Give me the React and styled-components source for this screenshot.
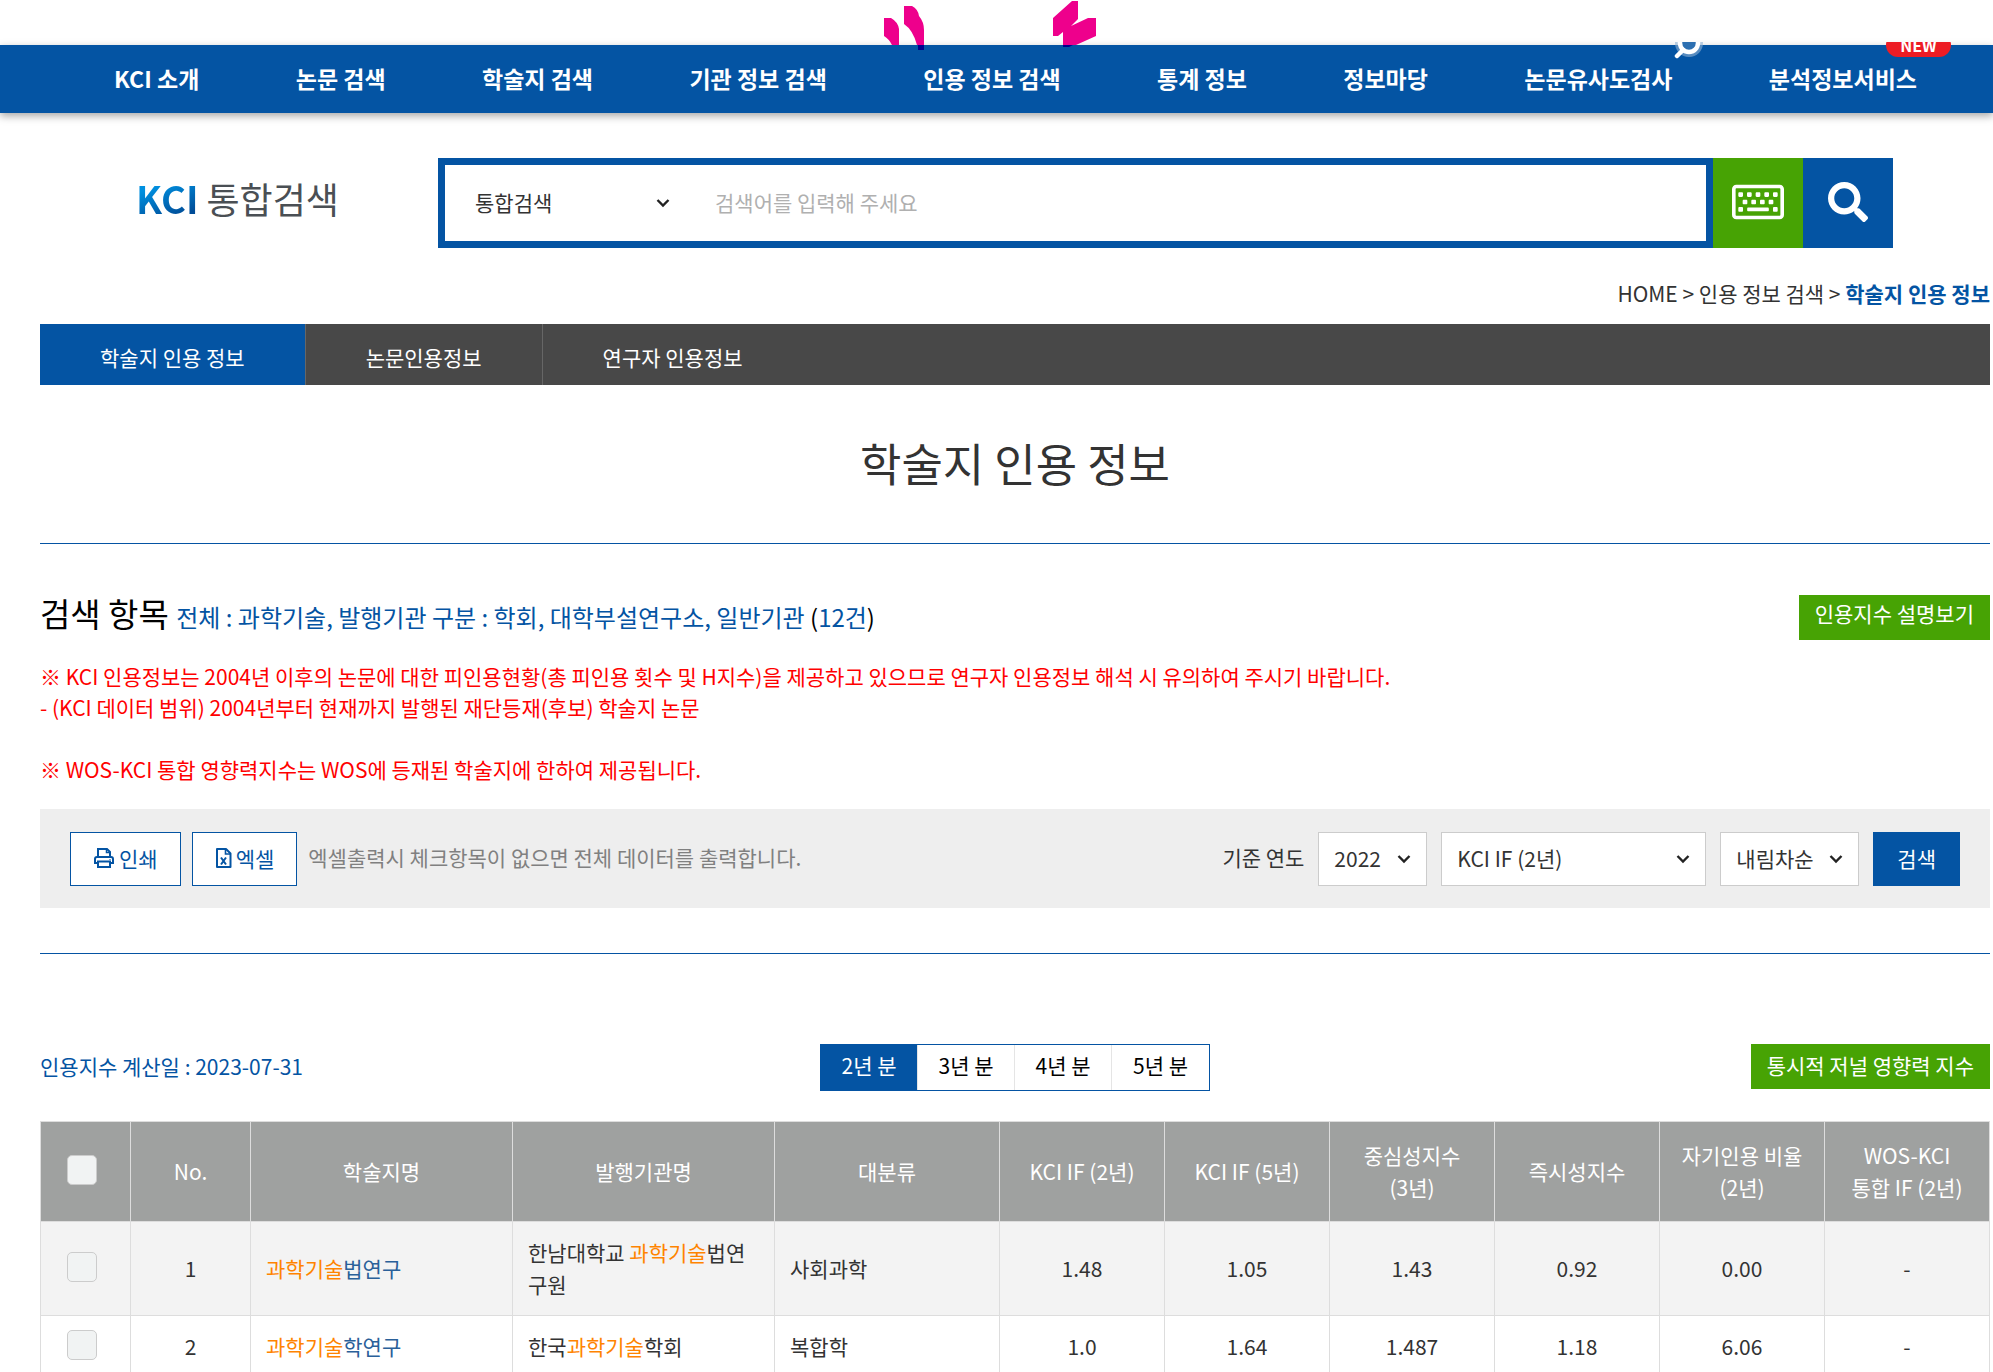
import styled, { createGlobalStyle } from 'styled-components';
import { useState } from 'react';
import { FaRegKeyboard, FaSearch } from 'react-icons/fa';

const GlobalStyle = createGlobalStyle`
    * {
        box-sizing: border-box;
    }
    body {
        margin: 0;
        background-color: white;
        color: #333;
        font-family: "Noto Sans CJK KR", "Noto Sans", sans-serif;
        font-size: 21px;
        line-height: 32px;
    }
    button, input, select {
        font-family: inherit;
        font-size: inherit;
        line-height: inherit;
        color: inherit;
    }
    a {
        color: inherit;
        text-decoration: none;
    }
`;

const Page = styled.div`
    overflow: hidden;
`;

const TopStrip = styled.div`
    position: relative;
    height: 45px;
`;

const TopMark = styled.svg`
    position: absolute;
    left: 44%;
    top: 0;
    z-index: 1;
    width: 220px;
    height: 52px;
`;

const Nav = styled.nav`
    display: flex;
    justify-content: space-between;
    align-items: center;
    height: 68px;
    padding: 0 76px 0 114px;
    background-color: #0454a3;
    box-shadow: 0 3px 8px rgba(0, 0, 0, 0.35);
`;

const NavLink = styled.a`
    position: relative;
    padding-bottom: 2px;
    color: white;
    font-size: 23px;
    line-height: 66px;
    font-weight: 700;
    white-space: nowrap;
`;

const NavMark = styled.span`
    position: absolute;
    top: -3px;
    right: ${(props) => props.$right};
    display: flex;
    align-items: flex-end;
    height: 18px;
    overflow: hidden;
`;

const NewBadge = styled.span`
    width: 65px;
    height: 24px;
    margin-bottom: 3px;
    border-radius: 14px;
    background-color: #ed1c24;
    font-size: 16px;
    line-height: 24px;
    text-align: center;
`;

const SearchSection = styled.form`
    display: flex;
    align-items: center;
    margin: 45px 100px 0 136px;
`;

const SearchLogo = styled.h2`
    width: 302px;
    margin: 0;
    padding-bottom: 10px;
    color: #4a4f54;
    font-size: 36px;
    line-height: 48px;
    font-weight: 400;
    white-space: nowrap;
`;

const LogoBrand = styled.span`
    background: linear-gradient(160deg, #0090e0 30%, #004c97 80%);
    background-clip: text;
    color: transparent;
    font-size: 38px;
    font-weight: 700;
`;

const SearchBox = styled.div`
    flex: 1;
    display: flex;
    height: 90px;
    border: 7px solid #0454a3;
`;

const Select = styled.select`
    width: ${(props) => props.$width};
    height: 54px;
    padding: 0 15px 2px;
    appearance: none;
    border: 1px solid #ccc;
    border-radius: 0;
    background: white url("data:image/svg+xml,%3Csvg xmlns='http://www.w3.org/2000/svg' width='14' height='10'%3E%3Cpath d='M1.5 2l5.500 5.500L12.500 2' fill='none' stroke='%23222' stroke-width='2.400'/%3E%3C/svg%3E") no-repeat right 15px center;
    outline: none;
    cursor: pointer;
`;

const ScopeSelect = styled(Select)`
    height: 100%;
    padding: 0 30px 2px;
    border: none;
`;

const SearchInput = styled.input`
    flex: 1;
    min-width: 0;
    padding: 0 30px 2px;
    border: none;
    outline: none;

    &::placeholder {
    color: #b0b0b0;
    }
`;

const SearchButton = styled.button`
    display: flex;
    justify-content: center;
    align-items: center;
    width: 90px;
    height: 90px;
    padding: 0 0 2px;
    border: none;
    background-color: ${(props) => props.$color};
    color: white;
    cursor: pointer;
`;

const Content = styled.main`
    padding: 0 3px 0 40px;
`;

const Breadcrumb = styled.div`
    margin: 29px 0 15px;
    text-align: right;
`;

const Current = styled.strong`
    color: #0454a3;
`;

const Tabs = styled.div`
    display: flex;
    height: 61px;
    background-color: #484848;
`;

const Tab = styled.a`
    padding: 17px 60px 0;
    border-right: 1px solid #666;
    background-color: ${(props) => (props.$active ? '#0454a3' : 'transparent')};
    color: white;

    &:last-child {
    border-right: none;
    }
`;

const PageTitle = styled.h1`
    margin: 0;
    padding: 44px 0 46px;
    border-bottom: 1px solid #0454a3;
    font-size: 45px;
    line-height: 68px;
    font-weight: 400;
    text-align: center;
`;

const SummaryRow = styled.div`
    display: flex;
    justify-content: space-between;
    align-items: flex-start;
    height: 50px;
    margin-top: 44px;
`;

const Summary = styled.h3`
    margin: 0;
    color: black;
    font-size: 33px;
    line-height: 50px;
    font-weight: 400;
`;

const Conditions = styled.span`
    font-size: 24px;
`;

const Blue = styled.span`
    color: #0454a3;
`;

const GreenButton = styled.button`
    height: 45px;
    padding: 0 16px 4px;
    border: none;
    background-color: #47a304;
    color: white;
    cursor: pointer;
`;

const InfoButton = styled(GreenButton)`
    margin-top: 7px;
    padding-bottom: 10px;
`;

const Notice = styled.p`
    margin: 23px 0 24px;
    color: red;
    line-height: 31px;
    white-space: pre-line;
`;

const Toolbar = styled.div`
    display: flex;
    justify-content: space-between;
    align-items: center;
    height: 99px;
    padding: 0 30px;
    background-color: #eee;
`;

const ToolGroup = styled.div`
    display: flex;
    align-items: center;
    gap: ${(props) => props.$gap};
`;

const OutlineButton = styled.button`
    display: flex;
    align-items: center;
    gap: 4px;
    height: 54px;
    padding: 0 22px 2px;
    border: 1px solid #0454a3;
    background-color: white;
    color: #0454a3;
    cursor: pointer;
`;

const Hint = styled.span`
    padding-bottom: 4px;
    color: #808080;
`;

const Label = styled.label`
    padding-bottom: 4px;
`;

const SubmitButton = styled.button`
    height: 54px;
    padding: 0 24px 2px;
    border: none;
    background-color: #0454a3;
    color: white;
    cursor: pointer;
`;

const ResultBar = styled.div`
    display: grid;
    grid-template-columns: 1fr auto 1fr;
    align-items: start;
    margin-top: 45px;
    padding: 90px 0 30px;
    border-top: 1px solid #0454a3;
`;

const CalcDate = styled.span`
    padding-top: 6px;
    color: #0454a3;
`;

const YearGroup = styled.div`
    display: flex;
    height: 47px;
    border: 1px solid #0454a3;
`;

const YearButton = styled.button`
    width: 97px;
    padding: 0 0 6px;
    border: none;
    border-right: 1px solid #e5e5e5;
    background-color: ${(props) => (props.$active ? '#0454a3' : 'white')};
    color: ${(props) => (props.$active ? 'white' : 'black')};
    cursor: pointer;

    &:last-child {
    border-right: none;
    }
`;

const RightCell = styled.div`
    display: flex;
    justify-content: flex-end;
`;

const Table = styled.table`
    width: 100%;
    table-layout: fixed;
    border-collapse: collapse;
`;

const Col = styled.col`
    width: ${(props) => props.$width};
`;

const HeadCell = styled.th`
    padding: 17px 10px 18px;
    border: 1px solid #ddd;
    background-color: #9fa1a0;
    color: white;
    font-weight: 400;
    white-space: pre-line;
`;

const Row = styled.tr`
    &:nth-child(odd) {
    background-color: #f3f3f3;
    }
`;

const Cell = styled.td`
    padding: 14px 15px 15px;
    border: 1px solid #ddd;
    text-align: ${(props) => (props.$left ? 'left' : 'center')};
`;

const Checkbox = styled.input`
    display: block;
    width: 30px;
    height: 30px;
    margin: 0 auto 4px 26px;
    appearance: none;
    border: 1px solid #ccc;
    border-radius: 5px;
    background-color: #f1f3f3;
    cursor: pointer;

    &:checked {
    background-color: #0454a3;
    }
`;

const CheckHead = styled(HeadCell)`
    padding: 0;
`;

const CheckCell = styled(Cell)`
    padding: 0;
`;

const JournalLink = styled.a`
    color: #2a6099;
`;

const Mark = styled.span`
    color: #ff8400;
`;

const menus = [
    { name: 'KCI 소개' },
    { name: '논문 검색' },
    { name: '학술지 검색' },
    { name: '기관 정보 검색' },
    { name: '인용 정보 검색' },
    { name: '통계 정보' },
    { name: '정보마당' },
    { name: '논문유사도검사', mark: 'search' },
    { name: '분석정보서비스', mark: 'new' },
];

const years = ['2년 분', '3년 분', '4년 분', '5년 분'];

const columns = [
    { title: 'No.', width: '120px' },
    { title: '학술지명' },
    { title: '발행기관명' },
    { title: '대분류', width: '225px' },
    { title: 'KCI IF (2년)', width: '165px' },
    { title: 'KCI IF (5년)', width: '165px' },
    { title: '중심성지수\n(3년)', width: '165px' },
    { title: '즉시성지수', width: '165px' },
    { title: '자기인용 비율\n(2년)', width: '165px' },
    { title: 'WOS-KCI\n통합 IF (2년)', width: '165px' },
];

const keyword = '과학기술';

const journals = [
    { no: 1, name: '과학기술법연구', org: '한남대학교 과학기술법연구원', field: '사회과학', values: ['1.48', '1.05', '1.43', '0.92', '0.00', '-'] },
    { no: 2, name: '과학기술학연구', org: '한국과학기술학회', field: '복합학', values: ['1.0', '1.64', '1.487', '1.18', '6.06', '-'] },
];

const Highlight = ({ text }) => {
    const [before, after] = text.split(keyword)
    return <>{before}<Mark>{keyword}</Mark>{after}</>
}

const PrintIcon = () => (
    <svg width="22" height="22" viewBox="0 0 22 22" fill="none" stroke="currentColor" strokeWidth="2">
        <path d="M5 10V2h9l3 3v5" />
        <path d="M13.500 2v3.500H17" strokeWidth="1.500" />
        <path d="M5 16H2v-4q0-2 2-2h14q2 0 2 2v4h-3" />
        <path d="M5 14.500h12V20H5z" />
        <circle cx="17" cy="12.600" r="0.700" fill="currentColor" stroke="none" />
    </svg>
)

const ExcelIcon = () => (
    <svg width="17" height="22" viewBox="0 0 17 22" fill="none" stroke="currentColor" strokeWidth="2">
        <path d="M2 2h9l4.500 4.500V20H2z" strokeLinejoin="round" />
        <path d="M10.500 2v5h5" strokeWidth="1.600" />
        <path d="M6 10.500l5 7M11 10.500l-5 7" />
    </svg>
)

const MiniSearchIcon = () => (
    <svg width="30" height="18" viewBox="0 0 30 18" fill="none">
        <circle cx="15" cy="1" r="12.500" stroke="#8fb0d2" strokeOpacity="0.6" strokeWidth="3" />
        <circle cx="15" cy="1" r="9" fill="#2c6fb1" stroke="white" strokeWidth="4.500" />
        <path d="M9 8l-6 6" stroke="white" strokeWidth="4.500" strokeLinecap="round" />
    </svg>
)

export default function App() {
    const [year, setYear] = useState(0)
    const [query, setQuery] = useState('')

    return (
        <Page>
            <GlobalStyle />
            <TopStrip>
                <TopMark viewBox="0 0 220 52">
                    <path d="M7 18h7q7 4 8 11v16h-7q-3-6-8-9z" fill="#ee008c" />
                    <path d="M27 6h8q6 3 7 10 5 6 5 14v15h-7q-4-15-13-21z" fill="#ee008c" />
                    <path d="M41 45h6v5h-6z" fill="#00008c" />
                    <path d="M176 18l19-17h6v18l-7 7 17-8h8v18l-20 9h-13V32l-5 4h-5z" fill="#ee008c" />
                    <path d="M186 45h10l-4 2h-6z" fill="#00008c" />
                </TopMark>
            </TopStrip>
            <Nav>
                {menus.map((menu) => (
                    <NavLink key={menu.name} href="#">
                        {menu.name}
                        {menu.mark === 'search' && <NavMark $right="-32px"><MiniSearchIcon /></NavMark>}
                        {menu.mark === 'new' && <NavMark $right="-34px"><NewBadge>NEW</NewBadge></NavMark>}
                    </NavLink>
                ))}
            </Nav>
            <SearchSection onSubmit={(e) => e.preventDefault()}>
                <SearchLogo><LogoBrand>KCI</LogoBrand> 통합검색</SearchLogo>
                <SearchBox>
                    <ScopeSelect $width="240px" aria-label="검색 구분">
                        <option>통합검색</option>
                    </ScopeSelect>
                    <SearchInput
                        aria-label="검색어"
                        placeholder="검색어를 입력해 주세요"
                        value={query}
                        onChange={(e) => setQuery(e.target.value)}
                    />
                </SearchBox>
                <SearchButton type="button" $color="#47a304" aria-label="키보드">
                    <FaRegKeyboard size={52} />
                </SearchButton>
                <SearchButton type="submit" $color="#0454a3" aria-label="검색">
                    <FaSearch size={40} />
                </SearchButton>
            </SearchSection>
            <Content>
                <Breadcrumb>
                    <a href="#">HOME</a> &gt; <a href="#">인용 정보 검색</a> &gt; <Current>학술지 인용 정보</Current>
                </Breadcrumb>
                <Tabs>
                    <Tab href="#" $active>학술지 인용 정보</Tab>
                    <Tab href="#">논문인용정보</Tab>
                    <Tab href="#">연구자 인용정보</Tab>
                </Tabs>
                <PageTitle>학술지 인용 정보</PageTitle>
                <SummaryRow>
                    <Summary>
                        검색 항목{' '}
                        <Conditions>
                            <Blue>전체 : 과학기술, 발행기관 구분 : 학회, 대학부설연구소, 일반기관</Blue> (<Blue>12건</Blue>)
                        </Conditions>
                    </Summary>
                    <InfoButton type="button">인용지수 설명보기</InfoButton>
                </SummaryRow>
                <Notice>
                    {'※ KCI 인용정보는 2004년 이후의 논문에 대한 피인용현황(총 피인용 횟수 및 H지수)을 제공하고 있으므로 연구자 인용정보 해석 시 유의하여 주시기 바랍니다.\n- (KCI 데이터 범위) 2004년부터 현재까지 발행된 재단등재(후보) 학술지 논문\n\n※ WOS-KCI 통합 영향력지수는 WOS에 등재된 학술지에 한하여 제공됩니다.'}
                </Notice>
                <Toolbar>
                    <ToolGroup $gap="11px">
                        <OutlineButton type="button"><PrintIcon />인쇄</OutlineButton>
                        <OutlineButton type="button"><ExcelIcon />엑셀</OutlineButton>
                        <Hint>엑셀출력시 체크항목이 없으면 전체 데이터를 출력합니다.</Hint>
                    </ToolGroup>
                    <ToolGroup $gap="14px">
                        <Label htmlFor="baseYear">기준 연도</Label>
                        <Select id="baseYear" $width="109px">
                            <option>2022</option>
                        </Select>
                        <Select $width="265px" aria-label="정렬 기준">
                            <option>KCI IF (2년)</option>
                        </Select>
                        <Select $width="139px" aria-label="정렬 순서">
                            <option>내림차순</option>
                        </Select>
                        <SubmitButton type="button">검색</SubmitButton>
                    </ToolGroup>
                </Toolbar>
                <ResultBar>
                    <CalcDate>인용지수 계산일 : 2023-07-31</CalcDate>
                    <YearGroup>
                        {years.map((name, index) => (
                            <YearButton key={name} type="button" $active={index === year} onClick={() => setYear(index)}>
                                {name}
                            </YearButton>
                        ))}
                    </YearGroup>
                    <RightCell>
                        <GreenButton type="button">통시적 저널 영향력 지수</GreenButton>
                    </RightCell>
                </ResultBar>
                <Table>
                    <colgroup>
                        <Col $width="90px" />
                        {columns.map((column) => (
                            <Col key={column.title} $width={column.width || 'auto'} />
                        ))}
                    </colgroup>
                    <thead>
                        <tr>
                            <CheckHead><Checkbox type="checkbox" aria-label="전체 선택" /></CheckHead>
                            {columns.map((column) => (
                                <HeadCell key={column.title}>{column.title}</HeadCell>
                            ))}
                        </tr>
                    </thead>
                    <tbody>
                        {journals.map((journal) => (
                            <Row key={journal.no}>
                                <CheckCell><Checkbox type="checkbox" aria-label={journal.name} /></CheckCell>
                                <Cell>{journal.no}</Cell>
                                <Cell $left><JournalLink href="#"><Highlight text={journal.name} /></JournalLink></Cell>
                                <Cell $left><Highlight text={journal.org} /></Cell>
                                <Cell $left>{journal.field}</Cell>
                                {journal.values.map((value, index) => (
                                    <Cell key={index}>{value}</Cell>
                                ))}
                            </Row>
                        ))}
                    </tbody>
                </Table>
            </Content>
        </Page>
    )
}
